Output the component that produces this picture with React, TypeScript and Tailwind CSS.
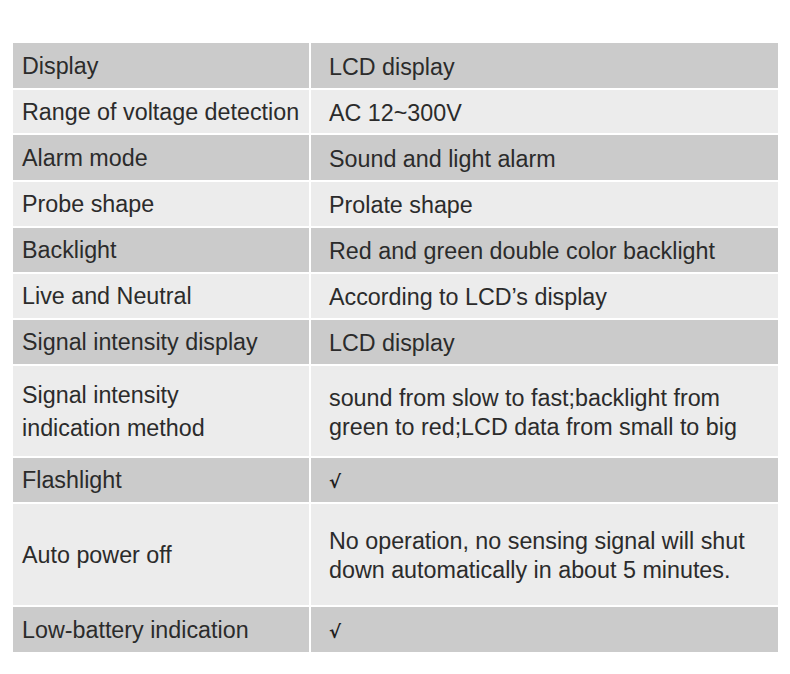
const rows: { label: string; value: string; h: string; dark: boolean }[] = [
  { label: "Display", value: "LCD display", h: "h-[45px]", dark: true },
  { label: "Range of voltage detection", value: "AC 12~300V", h: "h-[43px]", dark: false },
  { label: "Alarm mode", value: "Sound and light alarm", h: "h-[45px]", dark: true },
  { label: "Probe shape", value: "Prolate shape", h: "h-[44px]", dark: false },
  { label: "Backlight", value: "Red and green double color backlight", h: "h-[44px]", dark: true },
  { label: "Live and Neutral", value: "According to LCD\u2019s display", h: "h-[44px]", dark: false },
  { label: "Signal intensity display", value: "LCD display", h: "h-[44px]", dark: true },
  {
    label: "Signal intensity\nindication method",
    value: "sound from slow to fast;backlight from\ngreen to red;LCD data from small to big",
    h: "h-[90px]",
    dark: false,
  },
  { label: "Flashlight", value: "\u221a", h: "h-[44px]", dark: true },
  {
    label: "Auto power off",
    value: "No operation, no sensing signal will shut\ndown automatically in about 5 minutes.",
    h: "h-[101px]",
    dark: false,
  },
  { label: "Low-battery indication", value: "\u221a", h: "h-[45px]", dark: true },
];

export default function App() {
  return (
    <div className="w-[790px] h-[674px] bg-white pt-[43px] pl-[13px] font-['Liberation_Sans',Arial,sans-serif] text-[#2b2b2b]">
      <div className="grid grid-cols-[296px_467px] gap-[2px] bg-white">
        {rows.map((r, i) => {
          const bg = r.dark ? "bg-[#cbcbcb]" : "bg-[#ececec]";
          const check = r.value === "\u221a";
          return (
            <div key={i} className="contents">
              <div
                className={`${bg} ${r.h} flex items-center pl-[9px] pt-[1px] text-[23.3px] leading-[33px] whitespace-pre-line`}
              >
                {r.label}
              </div>
              <div
                className={`${bg} ${r.h} flex items-center pl-[18px] pt-[3px] whitespace-pre-line ${
                  check
                    ? "font-['DejaVu_Sans',sans-serif] text-[18px] font-bold leading-[29px] text-[#1e1e1e]"
                    : "text-[23.3px] leading-[29px]"
                }`}
              >
                {r.value}
              </div>
            </div>
          );
        })}
      </div>
    </div>
  );
}
